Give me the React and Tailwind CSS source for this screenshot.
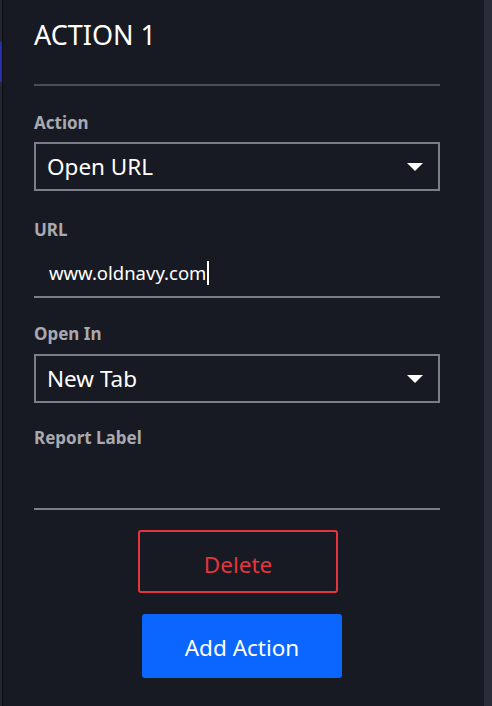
export default function App() {
  const font = { fontFamily: '"Noto Sans", "Open Sans", sans-serif' };
  const Caret = () => (
    <svg width="16" height="8" viewBox="0 0 16 8" className="shrink-0">
      <polygon points="0,0 16,0 8,8" fill="#ffffff" />
    </svg>
  );
  return (
    <div className="w-[492px] h-[706px] flex bg-[#181a23] overflow-hidden" style={font}>
      <div className="w-[2px] h-full flex flex-col bg-[#252732]">
        <div className="h-[42px]" />
        <div className="h-[40px] bg-[#2a30a8]" />
      </div>
      <div className="w-[1px] h-full bg-[#0c0d12]" />
      <div className="flex-1 flex flex-col pl-[31px] pr-[44px]">
        <div className="pt-[18px] h-[84px] text-[27px] text-white leading-[34px]">ACTION 1</div>
        <div className="h-[2px] bg-[#4a4c57]" />
        <div className="mt-[26px] text-[17px] font-bold text-[#a9a9b0] leading-[22px]">Action</div>
        <div className="mt-[8px] h-[49px] border-2 border-[#7b7d89] flex items-center justify-between pl-[11px] pr-[15px]">
          <span className="text-[22.5px] text-white">Open URL</span>
          <Caret />
        </div>
        <div className="mt-[28px] text-[17px] font-bold text-[#a9a9b0] leading-[22px]">URL</div>
        <div className="h-[55px] pt-[20px] flex items-start pl-[15px]">
          <span className="text-[18.5px] text-white leading-[24px]">www.oldnavy.com</span>
          <span className="w-[2px] h-[24px] bg-white ml-[1px]" />
        </div>
        <div className="h-[2px] bg-[#7b7d89]" />
        <div className="mt-[25px] text-[17px] font-bold text-[#a9a9b0] leading-[22px]">Open In</div>
        <div className="mt-[9px] h-[49px] border-2 border-[#7b7d89] flex items-center justify-between pl-[11px] pr-[15px]">
          <span className="text-[22.5px] text-white">New Tab</span>
          <Caret />
        </div>
        <div className="mt-[24px] text-[17px] font-bold text-[#a9a9b0] leading-[22px]">Report Label</div>
        <div className="mt-[59px] h-[2px] bg-[#7b7d89]" />
        <div className="mt-[20px] flex flex-col items-start">
          <button className="ml-[104px] w-[200px] h-[63px] pt-[6px] border-2 border-[#e5353c] rounded-[3px] text-[#e5353c] text-[22.5px]">Delete</button>
          <button className="ml-[108px] mt-[21px] w-[200px] h-[64px] pt-[4px] bg-[#0a66fe] rounded-[3px] text-white text-[22.5px]">Add Action</button>
        </div>
      </div>
      <div className="w-[8px] h-full bg-[#2a2c39]" />
    </div>
  );
}
